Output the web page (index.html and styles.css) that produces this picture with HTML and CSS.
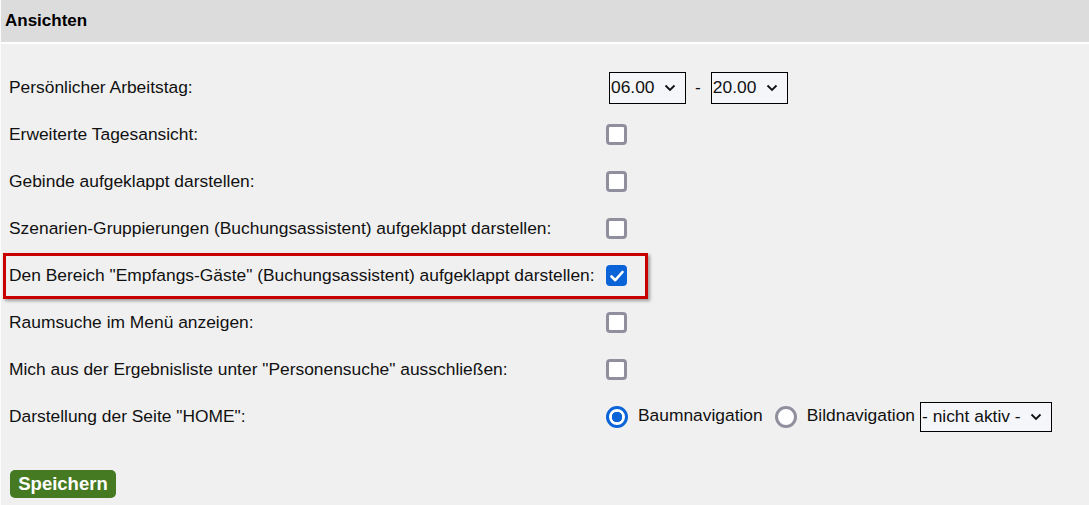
FILE: index.html
```html
<!DOCTYPE html>
<html lang="de">
<head>
<meta charset="utf-8">
<title>Ansichten</title>
<link rel="stylesheet" href="styles.css">
</head>
<body>
<div class="page">
  <div class="header">Ansichten</div>
  <div class="form">
    <div class="row">
      <div class="label">Persönlicher Arbeitstag:</div>
      <div class="control">
        <div class="select sel-time"><span>06.00</span><svg class="chev" viewBox="0 0 12 8" width="12" height="8"><path d="M1.5 1.5 L6 6 L10.5 1.5" fill="none" stroke="#111" stroke-width="1.8"/></svg></div>
        <span class="dash">-</span>
        <div class="select sel-time"><span>20.00</span><svg class="chev" viewBox="0 0 12 8" width="12" height="8"><path d="M1.5 1.5 L6 6 L10.5 1.5" fill="none" stroke="#111" stroke-width="1.8"/></svg></div>
      </div>
    </div>
    <div class="row">
      <div class="label">Erweiterte Tagesansicht:</div>
      <div class="control"><span class="cb"></span></div>
    </div>
    <div class="row">
      <div class="label">Gebinde aufgeklappt darstellen:</div>
      <div class="control"><span class="cb"></span></div>
    </div>
    <div class="row">
      <div class="label">Szenarien-Gruppierungen (Buchungsassistent) aufgeklappt darstellen:</div>
      <div class="control"><span class="cb"></span></div>
    </div>
    <div class="row highlight">
      <div class="label">Den Bereich "Empfangs-Gäste" (Buchungsassistent) aufgeklappt darstellen:</div>
      <div class="control"><span class="cb checked"><svg viewBox="0 0 20 20" width="20" height="20"><path d="M4.5 10.5 L8.3 14.2 L15.5 6" fill="none" stroke="#fff" stroke-width="2.6" stroke-linecap="round" stroke-linejoin="round"/></svg></span></div>
    </div>
    <div class="row">
      <div class="label">Raumsuche im Menü anzeigen:</div>
      <div class="control"><span class="cb"></span></div>
    </div>
    <div class="row">
      <div class="label">Mich aus der Ergebnisliste unter "Personensuche" ausschließen:</div>
      <div class="control"><span class="cb"></span></div>
    </div>
    <div class="row">
      <div class="label">Darstellung der Seite "HOME":</div>
      <div class="control">
        <span class="radio on"></span><span class="rlabel">Baumnavigation</span>
        <span class="radio"></span><span class="rlabel last">Bildnavigation</span>
        <div class="select sel-wide"><span>- nicht aktiv -</span><svg class="chev" viewBox="0 0 12 8" width="12" height="8"><path d="M1.5 1.5 L6 6 L10.5 1.5" fill="none" stroke="#111" stroke-width="1.8"/></svg></div>
      </div>
    </div>
    <div class="actions">
      <button class="save" type="button">Speichern</button>
    </div>
  </div>
</div>
</body>
</html>
```

FILE: styles.css
```css
html, body {
  margin: 0;
  padding: 0;
  background: #f0f0f0;
}
body {
  font-family: "Liberation Sans", Arial, sans-serif;
  font-size: 17.4px;
  color: #111;
}
.page {
  border-left: 1px solid #fbfbfb;
  min-height: 505px;
  box-sizing: border-box;
}
.header {
  height: 42px;
  line-height: 41px;
  background: #dcdcdc;
  border-bottom: 2px solid #ffffff;
  font-weight: bold;
  font-size: 17px;
  padding-left: 4px;
  color: #000;
}
.form {
  padding: 20px 0 0 8px;
}
.row {
  display: grid;
  grid-template-columns: 598px auto;
  align-items: center;
  height: 47px;
  position: relative;
}
.highlight::after {
  content: "";
  position: absolute;
  left: -6px;
  top: 1px;
  width: 639px;
  height: 40px;
  border: 3px solid #c80000;
  box-shadow: 2px 2px 3px rgba(0,0,0,0.35);
  pointer-events: none;
}
.label {
  white-space: nowrap;
}
.control {
  display: flex;
  align-items: center;
}
.select {
  display: flex;
  align-items: center;
  justify-content: space-between;
  box-sizing: border-box;
  border: 1.5px solid #000;
  background: #f5f6fa;
  padding: 0 9px 0 1px;
  color: #111;
}
.sel-time {
  width: 77px;
  height: 32px;
}
.sel-time:first-child {
  margin-left: 2px;
}
.sel-wide {
  width: 132px;
  height: 30px;
  margin-left: 5px;
  padding-left: 1px;
}
.dash {
  margin: 0 10px 0 9px;
}
.cb {
  width: 21px;
  height: 21px;
  box-sizing: border-box;
  border: 3px solid #8f8f9d;
  border-radius: 4px;
  background: #fff;
  display: inline-flex;
  align-items: center;
  justify-content: center;
  margin-left: -1px;
}
.cb.checked {
  background: #0b63d8;
  border-color: #0b63d8;
}
.cb.checked svg {
  flex: none;
}
.radio {
  width: 22px;
  height: 22px;
  box-sizing: border-box;
  border-radius: 50%;
  border: 3px solid #8f8f9d;
  background: #fff;
  margin-left: -1px;
}
.radio.on {
  border: 3.5px solid #0b63d8;
  background: radial-gradient(circle, #0b63d8 0 5px, #fff 5.5px);
}
.rlabel {
  margin: -3px 12px 0 10px;
}
.rlabel.last {
  margin-right: 0;
}
.rlabel + .radio {
  margin-left: 0;
}
.actions {
  padding-top: 29px;
}
.save {
  font-family: "Liberation Sans", Arial, sans-serif;
  font-weight: bold;
  font-size: 18.5px;
  color: #fff;
  background: #467a22;
  border: none;
  border-radius: 5px;
  height: 28px;
  padding: 0 8px;
  width: 106px;
  line-height: 28px;
  margin-left: 1px;
  margin-top: 1px;
}
```
